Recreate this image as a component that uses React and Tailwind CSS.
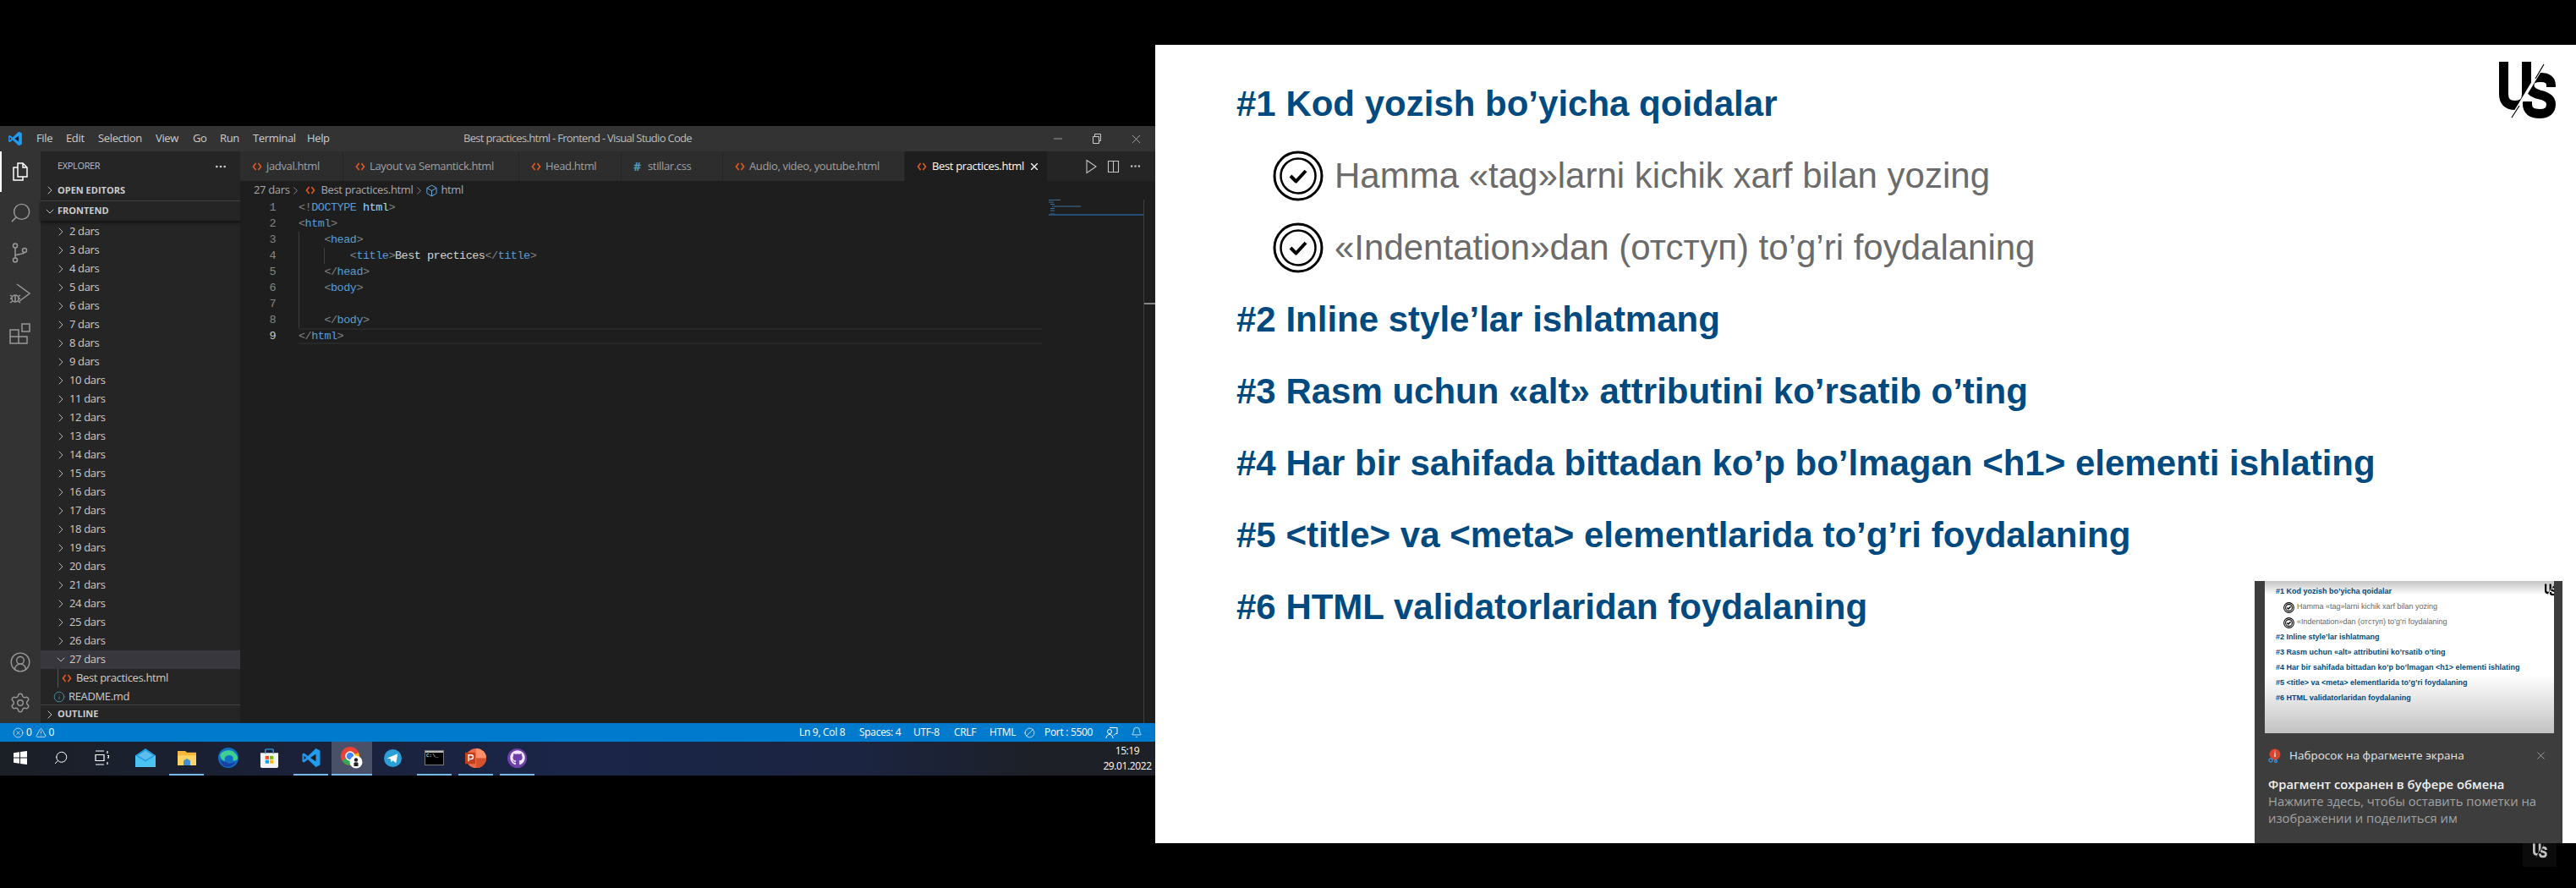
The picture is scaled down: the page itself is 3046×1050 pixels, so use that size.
import React from "react";
import { ChevronRight, ChevronDown, Info, X, Minus, Ellipsis, Search, CircleUserRound, Settings, Bell, Ban, CircleX, TriangleAlert, Box } from "lucide-react";
import { FaGithub } from "react-icons/fa";

const folders = ["2", "3", "4", "5", "6", "7", "8", "9", "10", "11", "12", "13", "14", "15", "16", "17", "18", "19", "20", "21", "24", "25", "26"];

const tabs = [
    { name: "jadval.html", width: "w-[122px]" },
    { name: "Layout va Semantick.html", width: "w-[208px]" },
    { name: "Head.html", width: "w-[121px]" },
    { name: "stillar.css", width: "w-[120px]", css: true },
    { name: "Audio, video, youtube.html", width: "w-[215px]" },
];

const menus = [
    { label: "File", width: "w-[35px]" },
    { label: "Edit", width: "w-[38px]" },
    { label: "Selection", width: "w-[68px]" },
    { label: "View", width: "w-[44px]" },
    { label: "Go", width: "w-[32px]" },
    { label: "Run", width: "w-[39px]" },
    { label: "Terminal", width: "w-[64px]" },
    { label: "Help", width: "w-[185px]" },
];

function HtmlIcon({ className = "" }) {
    return (
        <svg width="12" height="12" viewBox="0 0 12 12" fill="none" stroke="#e0561f" strokeWidth="1.7" className={className}>
            <path d="M4.6 2 1.5 6l3.1 4M7.4 2l3.1 4-3.1 4" />
        </svg>
    );
}

function VsLogo({ size = 22 }) {
    return (
        <svg width={size} height={size} viewBox="0 0 24 24">
            <path d="M17.5 1 8 10 3.500 6.500 1.500 7.500v9l2 1L8 14l9.500 9 5-2.400V3.400L17.500 1Z" fill="#1f9cf0" />
            <path d="M17.500 7.500 11 12l6.500 4.500Z" fill="#1e1e1e" />
            <path d="M3.500 9.500 6 12l-2.500 2.500Z" fill="#1e1e1e" />
        </svg>
    );
}

function Logo({ className = "", color = "#000", id = "a" }) {
    return (
        <svg viewBox="0 0 68 69" className={className} fill="none">
            <clipPath id={`${id}-u`}><path d="M55.800 -5 7.600 75H-5V-5Z" /></clipPath>
            <clipPath id={`${id}-s`}><path d="M59.800 -5 11.600 75H75V-5Z" /></clipPath>
            <path clipPath={`url(#${id}-u)`} d="M5.500 0V38Q5.500 51.500 19 51.500Q32.500 51.500 32.500 38V0" stroke={color} strokeWidth="11" />
            <path clipPath={`url(#${id}-s)`} d="M61.500 30V28Q61.500 18.500 49 18.500Q36 18.500 36 28Q36 36 48 39Q61.500 42 61.500 50Q61.500 61.500 48 61.500Q33.500 61.500 33.500 50V47" stroke={color} strokeWidth="11" />
            <path d="M53 3 43 20M24 52 15 66" stroke={color} strokeWidth="1.200" />
        </svg>
    );
}

function CheckBadge() {
    return (
        <svg width="60" height="60" viewBox="0 0 60 60" fill="none" stroke="#000" className="shrink-0">
            <circle cx="30" cy="30" r="28" strokeWidth="3" />
            <circle cx="30" cy="30" r="20.500" strokeWidth="2.500" />
            <path d="M21 30l6.500 6.500L39 24" strokeWidth="4" strokeLinejoin="round" />
        </svg>
    );
}

function ActivityIcon({ children, active }) {
    return (
        <div className={`h-12 w-12 flex items-center justify-center border-l-2 ${active ? "border-white text-white" : "border-transparent text-[#999999]"}`}>
            <div className="-ml-[2px] flex">{children}</div>
        </div>
    );
}

function TaskItem({ children, open, active, className = "" }) {
    return (
        <div className={`h-10 flex flex-col ${className} ${active ? "bg-[#4a5068]" : ""}`}>
            <div className="flex-1 flex items-center justify-center">{children}</div>
            <div className={`h-[2px] ${active ? "bg-[#76b9ed]" : open ? "mx-1 bg-[#76b9ed]" : ""}`}></div>
        </div>
    );
}

function CodeLine({ num, guides = [], current, children }) {
    return (
        <div className="h-[19px] flex leading-[19px]">
            <div className={`w-[42px] text-right shrink-0 ${current ? "text-[#c6c6c6]" : "text-[#858585]"}`}>{num}</div>
            <div className={`ml-[27px] flex-1 flex box-border ${current ? "border-y-2 border-[#282828] leading-[15px]" : ""}`}>
                {guides.map((g, i) => (
                    <div key={i} className={`w-[30.4px] shrink-0 border-l ${g ? "border-[#404040]" : "border-transparent"}`}></div>
                ))}
                <div className="whitespace-pre text-[#d4d4d4]">{children}</div>
            </div>
        </div>
    );
}

const B = ({ children }) => <span className="text-[#808080]">{children}</span>;
const T = ({ children }) => <span className="text-[#569cd6]">{children}</span>;

function SlideHead({ children }) {
    return <div className="h-[85px] flex items-center text-[42px] font-bold text-[#004a80] whitespace-nowrap">{children}</div>;
}

function SlideItem({ children }) {
    return (
        <div className="h-[85px] flex items-center pl-[43px] gap-[13px] text-[42px] text-[#6b6b6b] whitespace-nowrap">
            <CheckBadge />
            {children}
        </div>
    );
}

function ThumbCheck() {
    return (
        <svg width="13" height="13" viewBox="0 0 60 60" fill="none" stroke="#000" className="shrink-0">
            <circle cx="30" cy="30" r="27" strokeWidth="5" />
            <circle cx="30" cy="30" r="18" strokeWidth="5" />
            <path d="M20 30l7 7 13-13" strokeWidth="7" />
        </svg>
    );
}

export default function App() {
    return (
        <div className="w-[3046px] h-[1050px] bg-black flex overflow-hidden font-['Liberation_Sans',sans-serif]">
            {/* Left: VS Code + taskbar */}
            <div className="w-[1366px] shrink-0 pt-[149px]">
                <div className="h-[768px] flex flex-col font-['Open_Sans',sans-serif] text-[13px] tracking-[-0.35px]">
                    {/* Title bar */}
                    <div className="h-[30px] bg-[#333333] flex items-center text-[#cccccc]">
                        <div className="w-[43px] flex justify-center pr-[8px]"><VsLogo size={18} /></div>
                        {menus.map((m) => (
                            <div key={m.label} className={m.width}>{m.label}</div>
                        ))}
                        <div className="text-[#bbbbbb] whitespace-nowrap flex-1 tracking-[-0.7px]">Best practices.html - Frontend - Visual Studio Code</div>
                        <div className="w-[46px] flex justify-center"><Minus size={16} strokeWidth={1} /></div>
                        <div className="w-[46px] flex justify-center">
                            <svg width="12" height="12" viewBox="0 0 12 12" fill="none" stroke="#ccc"><path d="M1.500 3.500h7v8h-7zM3.500 3.500V.5h7v8h-2" /></svg>
                        </div>
                        <div className="w-[46px] flex justify-center"><X size={17} strokeWidth={1} /></div>
                    </div>

                    <div className="flex-1 flex min-h-0">
                        {/* Activity bar */}
                        <div className="w-12 bg-[#333333] flex flex-col">
                            <ActivityIcon active>
                                <svg width="24" height="26" viewBox="0 0 24 26" fill="none" stroke="currentColor" strokeWidth="1.500"><path d="M9 3h6l5 5v11H9z" /><path d="M15 3v5h5" /><path d="M9 8H4v15h11v-4" /></svg>
                            </ActivityIcon>
                            <ActivityIcon>
                                <Search size={27} strokeWidth={1.3} className="-scale-x-100" />
                            </ActivityIcon>
                            <ActivityIcon>
                                <svg width="24" height="26" viewBox="0 0 24 26" fill="none" stroke="currentColor" strokeWidth="1.500"><circle cx="6" cy="4.500" r="2.500" /><circle cx="6" cy="21.500" r="2.500" /><circle cx="17" cy="10" r="2.500" /><path d="M6 7v12M6 17c0-3 10-2 11-4.500" /></svg>
                            </ActivityIcon>
                            <ActivityIcon>
                                <svg width="26" height="26" viewBox="0 0 26 26" fill="none" stroke="currentColor" strokeWidth="1.500"><path d="M9 2l15 11-12 9" /><circle cx="7" cy="19" r="4" /><path d="M1 15l3 2M13 15l-3 2M1 19h2M11 19h2M1 24l3-2M13 24l-3-2M7 15v8" /></svg>
                            </ActivityIcon>
                            <ActivityIcon>
                                <svg width="26" height="26" viewBox="0 0 26 26" fill="none" stroke="currentColor" strokeWidth="1.500"><path d="M1 8h10v16H1zM1 16h20v8H11V8" /><path d="M15 1h9v9h-9z" /></svg>
                            </ActivityIcon>
                            <div className="flex-1"></div>
                            <ActivityIcon><CircleUserRound size={26} strokeWidth={1.3} /></ActivityIcon>
                            <ActivityIcon><Settings size={26} strokeWidth={1.3} /></ActivityIcon>
                        </div>

                        {/* Sidebar */}
                        <div className="w-[236px] bg-[#252526] flex flex-col text-[#cccccc]">
                            <div className="h-[35px] flex items-center pl-[20px] pr-[15px] justify-between">
                                <span className="text-[11px] text-[#bbbbbb]">EXPLORER</span>
                                <Ellipsis size={16} />
                            </div>
                            <div className="h-[22px] flex items-center pl-[3px] font-bold text-[11px] tracking-normal text-[#cccccc]">
                                <ChevronRight size={16} strokeWidth={1.4} className="mr-[1px]" />OPEN EDITORS
                            </div>
                            <div className="h-[24px] mt-[1px] flex items-center pl-[3px] border-t border-[#444444] font-bold text-[11px] tracking-normal shadow-[0_2px_3px_#111]">
                                <ChevronDown size={16} strokeWidth={1.4} className="mr-[1px]" />FRONTEND
                            </div>
                            <div className="flex-1 pt-[2px] min-h-0">
                                {folders.map((f) => (
                                    <div key={f} className="h-[22px] flex items-center pl-[16px]">
                                        <ChevronRight size={16} strokeWidth={1.3} className="mr-[2px]" />
                                        <span>{f} dars</span>
                                    </div>
                                ))}
                                <div className="h-[22px] flex items-center pl-[16px] bg-[#37373d]">
                                    <ChevronDown size={16} strokeWidth={1.3} className="mr-[2px]" />
                                    <span>27 dars</span>
                                </div>
                                <div className="h-[22px] flex items-center ml-[20px] pl-[4px] border-l border-[#585858]">
                                    <HtmlIcon className="mr-[5px]" />
                                    <span>Best practices.html</span>
                                </div>
                                <div className="h-[22px] flex items-center pl-[15px]">
                                    <Info size={14} strokeWidth={1.4} className="mr-[4px] text-[#519aba]" />
                                    <span>README.md</span>
                                </div>
                            </div>
                            <div className="h-[22px] flex items-center pl-[3px] border-t border-[#444444] font-bold text-[11px] tracking-normal">
                                <ChevronRight size={16} strokeWidth={1.4} className="mr-[1px]" />OUTLINE
                            </div>
                        </div>

                        {/* Editor */}
                        <div className="flex-1 bg-[#1e1e1e] flex flex-col min-w-0">
                            <div className="h-[35px] bg-[#252526] flex items-stretch">
                                {tabs.map((t) => (
                                    <div key={t.name} className={`${t.width} bg-[#2d2d2d] border-r border-[#252526] flex items-center pl-[14px] text-[#a0a0a0] whitespace-nowrap`}>
                                        {t.css ? <span className="w-[12px] mr-[5px] text-[#519aba] font-bold text-[14px]">#</span> : <HtmlIcon className="mr-[5px]" />}
                                        {t.name}
                                    </div>
                                ))}
                                <div className="w-[168px] bg-[#1e1e1e] flex items-center pl-[14px] text-white whitespace-nowrap">
                                    <HtmlIcon className="mr-[6px]" />
                                    Best practices.html
                                    <X size={14} strokeWidth={2} className="ml-[5px]" />
                                </div>
                                <div className="flex-1 flex items-center justify-end pr-[16px] gap-[11px] text-[#c5c5c5]">
                                    <svg width="15" height="18" viewBox="0 0 15 18" fill="none" stroke="currentColor" strokeWidth="1.100"><path d="M2 1.500 13 9 2 16.500z" /></svg>
                                    <svg width="15" height="16" viewBox="0 0 15 16" fill="none" stroke="currentColor" strokeWidth="1.100"><path d="M1.500 1.500h12v13h-12zM7.500 1.500v13" /></svg>
                                    <Ellipsis size={15} />
                                </div>
                            </div>

                            <div className="h-[22px] flex items-center pl-[16px] text-[#a9a9a9]">
                                <span>27 dars</span>
                                <ChevronRight size={15} strokeWidth={1.2} />
                                <HtmlIcon className="mx-[4px]" />
                                <span className="ml-[2px]">Best practices.html</span>
                                <ChevronRight size={15} strokeWidth={1.2} />
                                <Box size={15} strokeWidth={1.4} className="text-[#75beff] mr-[3px]" />
                                <span>html</span>
                            </div>

                            <div className="flex-1 flex min-h-0">
                                <div className="w-[948px] font-['Liberation_Mono',monospace] text-[13.5px] tracking-[-0.5px]">
                                    <CodeLine num={1}><B>{"<!"}</B><T>DOCTYPE</T> <span className="text-[#9cdcfe]">html</span><B>{">"}</B></CodeLine>
                                    <CodeLine num={2}><B>{"<"}</B><T>html</T><B>{">"}</B></CodeLine>
                                    <CodeLine num={3} guides={[1]}><B>{"<"}</B><T>head</T><B>{">"}</B></CodeLine>
                                    <CodeLine num={4} guides={[1, 1]}><B>{"<"}</B><T>title</T><B>{">"}</B>Best prectices<B>{"</"}</B><T>title</T><B>{">"}</B></CodeLine>
                                    <CodeLine num={5} guides={[1]}><B>{"</"}</B><T>head</T><B>{">"}</B></CodeLine>
                                    <CodeLine num={6} guides={[1]}><B>{"<"}</B><T>body</T><B>{">"}</B></CodeLine>
                                    <CodeLine num={7} guides={[1]}></CodeLine>
                                    <CodeLine num={8} guides={[1]}><B>{"</"}</B><T>body</T><B>{">"}</B></CodeLine>
                                    <CodeLine num={9} current><B>{"</"}</B><T>html</T><B>{">"}</B></CodeLine>
                                </div>
                                {/* Minimap */}
                                <div className="w-[120px] pl-[8px]">
                                    <svg width="112" height="30" viewBox="0 0 112 30">
                                        <path d="M0 .5h14M0 3h6M2 5.500h5M4 8h34M2 10.500h5M2 13h5M2 17h5" stroke="#3f6f96" strokeWidth="1" />
                                        <path d="M0 18h112" stroke="#264f78" strokeWidth="2" />
                                    </svg>
                                </div>
                                <div className="w-[14px] border-l border-[#3f3f3f] pt-[122px]">
                                    <div className="h-[2px] bg-[#858585]"></div>
                                </div>
                            </div>
                        </div>
                    </div>

                    {/* Status bar */}
                    <div className="h-[22px] bg-[#007acc] flex items-center text-white text-[12px] tracking-[-0.3px]">
                        <CircleX size={13} strokeWidth={1.3} className="ml-[15px]" />
                        <span className="ml-[3px]">0</span>
                        <TriangleAlert size={13} strokeWidth={1.3} className="ml-[4px]" />
                        <span className="ml-[3px]">0</span>
                        <div className="flex-1"></div>
                        <span className="w-[71px]">Ln 9, Col 8</span>
                        <span className="w-[64px]">Spaces: 4</span>
                        <span className="w-[48px]">UTF-8</span>
                        <span className="w-[42px]">CRLF</span>
                        <span className="w-[41px]">HTML</span>
                        <Ban size={13} strokeWidth={1.3} className="-scale-x-100 mr-[11px]" />
                        <span className="w-[72px]">Port : 5500</span>
                        <svg width="15" height="15" viewBox="0 0 15 15" fill="none" stroke="#fff" className="mr-[15px]"><circle cx="5" cy="6" r="2.500" /><path d="M1 14c0-3 2-4.500 4-4.500s4 1.500 4 4.500M5 1.500h9v7h-2l-2 2" /></svg>
                        <Bell size={14} strokeWidth={1.3} className="mr-[15px]" />
                    </div>

                    {/* Taskbar */}
                    <div className="h-10 flex bg-[linear-gradient(90deg,#1b1f26_0%,#1a2138_25%,#1a2548_50%,#1b2440_75%,#1d2026_90%)] text-white">
                        <TaskItem className="w-12">
                            <svg width="16" height="16" viewBox="0 0 16 16" fill="#fff"><path d="M0 2.300 7 1.300v6.200H0zM8 1.100 16 0v7.500H8zM0 8.500h7v6.200l-7-1zM8 8.500h8V16l-8-1.100z" /></svg>
                        </TaskItem>
                        <TaskItem className="w-12"><Search size={18} strokeWidth={1.3} className="-scale-x-100" /></TaskItem>
                        <TaskItem className="w-[51px] pr-[3px]">
                            <svg width="17" height="18" viewBox="0 0 17 18" fill="none" stroke="#fff" strokeWidth="1.200"><path d="M1 1h10M1 17h10M1 5.500h10v7H1zM15 1v3M15 6.500h1.500v2.500H15M15 14v3" /></svg>
                        </TaskItem>
                        <TaskItem className="w-[49px]">
                            <svg width="24" height="22" viewBox="0 0 24 24" preserveAspectRatio="none"><path d="M0 9 12 0l12 9v15H0z" fill="#1c9fe8" /><path d="M0 9l12 8 12-8v15H0z" fill="#4cc2f1" /><path d="M3 9 12 3l9 6-9 6z" fill="#fff" opacity=".3" /></svg>
                        </TaskItem>
                        <TaskItem className="w-[49px]" open>
                            <svg width="22" height="18" viewBox="0 0 22 20" preserveAspectRatio="none"><path d="M0 1h9l2 2h11v17H0z" fill="#f5b83d" /><path d="M0 7h22v13H0z" fill="#fcd463" /><path d="M7 20v-6l4-3 4 3v6z" fill="#3d8fd1" /></svg>
                        </TaskItem>
                        <TaskItem className="w-[49px]">
                            <svg width="24" height="24" viewBox="0 0 24 24"><circle cx="12" cy="12" r="12" fill="#0f6fc6" /><path d="M2 9C5 2 20 0 23 12c0 3-3 4-6 3 2-3 0-6-4-6-5 0-6 4-5 7-3-1-5-3-6-7z" fill="#3fd08f" /><path d="M9 17c3 3 9 2 12-1-2 5-8 8-13 6-3-1-5-4-6-8 2 2 4 3 7 3z" fill="#1b3f9c" /></svg>
                        </TaskItem>
                        <TaskItem className="w-[49px]">
                            <svg width="23" height="23" viewBox="0 0 24 26" preserveAspectRatio="none"><path d="M1 6h22v18q0 2-2 2H3q-2 0-2-2z" fill="#f3f3f3" /><path d="M7 7V3q0-2 2-2h6q2 0 2 2v4" fill="none" stroke="#2a9de0" strokeWidth="1.500" /><path d="M7 10h4.500v4.500H7z" fill="#f25022" /><path d="M12.500 10H17v4.500h-4.500z" fill="#7fba00" /><path d="M7 15.500h4.500V20H7z" fill="#00a4ef" /><path d="M12.500 15.500H17V20h-4.500z" fill="#ffb900" /></svg>
                        </TaskItem>
                        <TaskItem className="w-[49px]" open><VsLogo size={24} /></TaskItem>
                        <TaskItem className="w-[48px]" active>
                            <svg width="26" height="26" viewBox="0 0 26 26">
                                <circle cx="11" cy="11" r="11" fill="#ea4335" />
                                <path d="M11 11 1.500 16A11 11 0 0 0 11 22z" fill="#34a853" />
                                <path d="M11 11 11 22A11 11 0 0 0 21 7z" fill="#fbbc05" />
                                <circle cx="11" cy="11" r="5" fill="#4285f4" stroke="#fff" strokeWidth="1.500" />
                                <circle cx="18" cy="18" r="7.500" fill="#fff" />
                                <circle cx="18" cy="15.500" r="2.200" fill="#222" />
                                <path d="M15.500 23v-4q2.500-1.500 5 0v4z" fill="#222" />
                            </svg>
                        </TaskItem>
                        <TaskItem className="w-[49px]">
                            <svg width="21" height="21" viewBox="0 0 22 22"><circle cx="11" cy="11" r="11" fill="#2a9fd8" /><path d="M4 11 17 5.500l-2 11.500-4-3-2 2-.5-4z" fill="#fff" /></svg>
                        </TaskItem>
                        <TaskItem className="w-[49px]" open>
                            <div className="w-[23px] h-[18px] bg-black border border-[#777] flex flex-col">
                                <div className="h-[2px] bg-[#bbb]"></div>
                                <span className="text-[6px] leading-[8px] pl-[1px] font-['Liberation_Mono',monospace] tracking-normal">C:\_</span>
                            </div>
                        </TaskItem>
                        <TaskItem className="w-[49px]" open>
                            <svg width="25" height="23" viewBox="0 0 25 24" preserveAspectRatio="none"><circle cx="13" cy="12" r="12" fill="#ed6c47" /><path d="M13 0a12 12 0 0 1 12 12H13z" fill="#ff8f6b" /><path d="M13 12h12a12 12 0 0 1-12 12z" fill="#d35230" /><path d="M0 5h12v14H0z" fill="#c43e1c" /><path d="M4 16V8h3q2.500 0 2.500 2.500T7 13H5.200" fill="none" stroke="#fff" strokeWidth="1.500" /></svg>
                        </TaskItem>
                        <TaskItem className="w-[49px]" open>
                            <div className="w-[23px] h-[23px] rounded-full bg-[#6e40a8] flex items-center justify-center">
                                <FaGithub size={18} color="#f1e8ff" />
                            </div>
                        </TaskItem>
                        <div className="flex-1"></div>
                        <div className="w-[56px] mr-[5px] flex flex-col items-center justify-center text-[12px] tracking-[-0.4px] leading-[18px]">
                            <span>15:19</span>
                            <span>29.01.2022</span>
                        </div>
                    </div>
                </div>
            </div>

            {/* Right: slide */}
            <div className="flex-1 pt-[53px] relative">
                <div className="h-[944px] bg-white pl-[96px] pt-[27px] relative">
                    <SlideHead>#1 Kod yozish bo’yicha qoidalar</SlideHead>
                    <SlideItem>Hamma «tag»larni kichik xarf bilan yozing</SlideItem>
                    <SlideItem>«Indentation»dan (отступ) to’g’ri foydalaning</SlideItem>
                    <SlideHead>#2 Inline style’lar ishlatmang</SlideHead>
                    <SlideHead>#3 Rasm uchun «alt» attributini ko’rsatib o’ting</SlideHead>
                    <SlideHead>#4 Har bir sahifada bittadan ko’p bo’lmagan &lt;h1&gt; elementi ishlating</SlideHead>
                    <SlideHead>#5 &lt;title&gt; va &lt;meta&gt; elementlarida to’g’ri foydalaning</SlideHead>
                    <SlideHead>#6 HTML validatorlaridan foydalaning</SlideHead>

                    <Logo id="big" className="absolute top-[20px] right-[23px] w-[68px] h-[69px]" />

                    {/* Snip notification */}
                    <div className="absolute top-[634px] right-[16px] w-[364px] h-[310px] bg-[#3d3d3d] pl-[12px] pr-[10px] font-['Open_Sans',sans-serif]">
                        <div className="h-[180px] bg-[linear-gradient(#c4c4c4_0%,#ffffff_9%,#ffffff_62%,#c2c2c2_100%)] pl-[13px] pt-[4px] overflow-hidden relative font-['Liberation_Sans',sans-serif] text-[9px] whitespace-nowrap">
                            <div className="h-[18px] flex items-center font-bold text-[#004a80]">#1 Kod yozish bo’yicha qoidalar</div>
                            <div className="h-[18px] flex items-center gap-[3px] pl-[9px] text-[#666666]"><ThumbCheck />Hamma «tag»larni kichik xarf bilan yozing</div>
                            <div className="h-[18px] flex items-center gap-[3px] pl-[9px] text-[#666666]"><ThumbCheck />«Indentation»dan (отступ) to’g’ri foydalaning</div>
                            <div className="h-[18px] flex items-center font-bold text-[#004a80]">#2 Inline style’lar ishlatmang</div>
                            <div className="h-[18px] flex items-center font-bold text-[#004a80]">#3 Rasm uchun «alt» attributini ko’rsatib o’ting</div>
                            <div className="h-[18px] flex items-center font-bold text-[#004a80]">#4 Har bir sahifada bittadan ko’p bo’lmagan &lt;h1&gt; elementi ishlating</div>
                            <div className="h-[18px] flex items-center font-bold text-[#004a80]">#5 &lt;title&gt; va &lt;meta&gt; elementlarida to’g’ri foydalaning</div>
                            <div className="h-[18px] flex items-center font-bold text-[#004a80]">#6 HTML validatorlaridan foydalaning</div>
                            <Logo id="thumb" className="absolute top-[3px] -right-[3px] w-[14px] h-[15px]" />
                        </div>
                        <div className="h-[50px] flex items-center justify-between pl-[4px] pr-[8px] pt-[3px] text-[#e6e6e6] text-[13.5px]">
                            <div className="flex items-center gap-[10px]">
                                <svg width="15" height="17" viewBox="0 0 15 17"><circle cx="8" cy="7" r="6.500" fill="#d9442a" /><path d="M8 1l1 9-2 0z" fill="#e8e8e8" /><circle cx="3" cy="14" r="2" fill="none" stroke="#3a8fe0" strokeWidth="1.300" /><circle cx="9" cy="15" r="1.500" fill="none" stroke="#3a8fe0" strokeWidth="1.300" /></svg>
                                Набросок на фрагменте экрана
                            </div>
                            <X size={15} strokeWidth={1} className="text-[#d0d0d0]" />
                        </div>
                        <div className="pl-[4px] pr-[10px] text-[14.8px] leading-[20px]">
                            <div className="font-semibold text-[#f0f0f0]">Фрагмент сохранен в буфере обмена</div>
                            <div className="text-[#a3a3a3]">Нажмите здесь, чтобы оставить пометки на изображении и поделиться им</div>
                        </div>
                    </div>
                </div>
                {/* Watermark under the slide */}
                <div className="absolute top-[997px] right-[23px] w-[40px] h-[28px] bg-[#0b0b0b] flex justify-center items-start">
                    <Logo id="mark" className="w-[17px] h-[18px]" color="#c0c0c0" />
                </div>
            </div>
        </div>
    );
}
